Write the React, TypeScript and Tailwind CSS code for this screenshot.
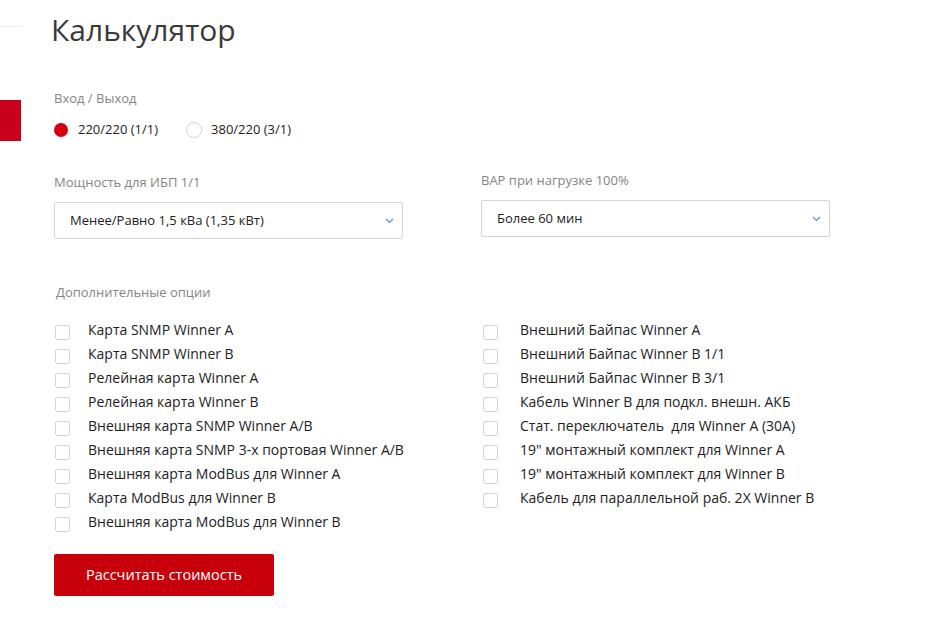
import React from 'react';

const leftOptions = [
  'Карта SNMP Winner A',
  'Карта SNMP Winner B',
  'Релейная карта Winner A',
  'Релейная карта Winner B',
  'Внешняя карта SNMP Winner A/B',
  'Внешняя карта SNMP 3-х портовая Winner A/B',
  'Внешняя карта ModBus для Winner A',
  'Карта ModBus для Winner B',
  'Внешняя карта ModBus для Winner B',
];

const rightOptions = [
  'Внешний Байпас Winner A',
  'Внешний Байпас Winner B 1/1',
  'Внешний Байпас Winner B 3/1',
  'Кабель Winner B для подкл. внешн. АКБ',
  'Стат. переключатель  для Winner A (30A)',
  '19" монтажный комплект для Winner A',
  '19" монтажный комплект для Winner B',
  'Кабель для параллельной раб. 2X Winner B',
];

const Chevron = () => (
  <svg width="9" height="6" viewBox="0 0 9 6" fill="none">
    <path d="M1 1l3.5 3.5L8 1" stroke="#5b8fd6" strokeWidth="1.2" />
  </svg>
);

const Select: React.FC<{ label: string; value: string }> = ({ label, value }) => (
  <div>
    <div className="h-[18px] text-[13px] leading-[18px] text-[#858585]">{label}</div>
    <div className="mt-[11px] flex h-[37px] items-center justify-between rounded-[2px] border border-[#d6d6d6] bg-white pl-[15px] pr-[8px]">
      <span className="text-[13px] text-[#222]">{value}</span>
      <Chevron />
    </div>
  </div>
);

const Option: React.FC<{ text: string; wide?: boolean }> = ({ text, wide }) => (
  <label className="flex h-[24px] items-start">
    <span className="ml-px mt-[7px] h-[15px] w-[15px] shrink-0 rounded-[2px] border border-[#d4d4d4] bg-white" />
    <span
      className={
        wide
          ? 'ml-[22px] whitespace-pre text-[14px] leading-[24px] text-[#222]'
          : 'ml-[18px] whitespace-pre text-[14px] leading-[24px] text-[#222]'
      }
    >
      {text}
    </span>
  </label>
);

const App: React.FC = () => {
  return (
    <div className="flex min-h-screen bg-white font-['Open_Sans',sans-serif]">
      <aside className="w-[21px] shrink-0 pt-[26px]">
        <div className="h-px bg-[#ececec]" />
        <div className="mt-[73px] h-[41px] bg-[#c9001b]" />
      </aside>

      <main className="pl-[33px] pt-[12px]">
        <h1 className="-ml-[3px] text-[30px] leading-[36px] text-[#3a3a3a]">Калькулятор</h1>

        <div className="mt-[41px] h-[18px] text-[13px] leading-[18px] text-[#858585]">Вход / Выход</div>
        <div className="mt-[14px] flex h-[18px] items-center text-[13px] text-[#222]">
          <span className="h-[14px] w-[14px] rounded-full bg-[#d50012]" />
          <span className="ml-[10px]">220/220 (1/1)</span>
          <span className="ml-[28px] h-[16px] w-[16px] rounded-full border border-[#d4d4d4] bg-white" />
          <span className="ml-[9px]">380/220 (3/1)</span>
        </div>

        <div className="mt-[32px] grid grid-cols-[349px_349px] gap-x-[78px]">
          <div className="pt-[2px]">
            <Select label="Мощность для ИБП 1/1" value="Менее/Равно 1,5 кВа (1,35 кВт)" />
          </div>
          <Select label="ВАР при нагрузке 100%" value="Более 60 мин" />
        </div>

        <div className="ml-[2px] mt-[44px] h-[18px] text-[13px] leading-[18px] text-[#858585]">Дополнительные опции</div>

        <div className="mt-[17px] grid grid-cols-[349px_349px] gap-x-[78px]">
          <div className="flex flex-col">
            {leftOptions.map((o) => (
              <Option key={o} text={o} />
            ))}
          </div>
          <div className="flex flex-col pl-px">
            {rightOptions.map((o) => (
              <Option key={o} text={o} wide />
            ))}
          </div>
        </div>

        <button className="mt-[20px] h-[42px] w-[220px] rounded-[2px] bg-[#c8000b] text-[14.5px] text-white">
          Рассчитать стоимость
        </button>
      </main>
    </div>
  );
};

export default App;
